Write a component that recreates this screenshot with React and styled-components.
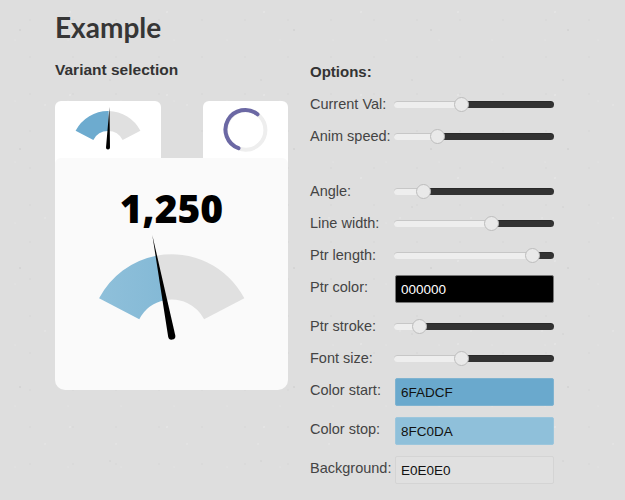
import React from "react";
import styled, { createGlobalStyle } from "styled-components";

const GlobalStyle = createGlobalStyle`
  html, body {
    margin: 0;
    height: 100%;
    overflow: hidden;
    background-color: #dedede;
    background-image:
      radial-gradient(circle at 20px 30px, #d3d3d3 0.6px, transparent 1.4px),
      radial-gradient(circle at 70px 12px, #e4e4e4 0.6px, transparent 1.4px),
      radial-gradient(circle at 110px 80px, #d6d6d6 0.5px, transparent 1.2px),
      radial-gradient(circle at 45px 105px, #e3e3e3 0.6px, transparent 1.3px),
      radial-gradient(circle at 30px 20px, #d9d9d9 0.5px, transparent 1.2px),
      radial-gradient(circle at 15px 40px, #e2e2e2 0.5px, transparent 1.2px);
    background-size: 137px 119px, 97px 83px, 151px 127px, 71px 113px, 43px 37px, 53px 61px;
    font-family: "Liberation Sans", Arial, sans-serif;
  }
`;

const Page = styled.div`
  display: flex;
  width: 625px;
  height: 500px;
  box-sizing: border-box;
  padding-left: 55px;
`;

const LeftColumn = styled.div`
  width: 233px;
  margin-right: 22px;
`;

const Title = styled.h1`
  margin: 0;
  padding-top: 8px;
  height: 52px;
  font-family: Lato, sans-serif;
  font-size: 28px;
  font-weight: 700;
  line-height: 38px;
  color: #363636;
`;

const Heading = styled.div`
  font-size: 15.5px;
  font-weight: 700;
  line-height: 20px;
  color: #333;
`;

const Tabs = styled.div`
  display: flex;
  justify-content: space-between;
  margin-top: 21px;
`;

const Tab = styled.div`
  width: ${(p) => p.$width}px;
  height: 63px;
  background: #fff;
  border-radius: 6px 6px 0 0;
`;

const Card = styled.div`
  position: relative;
  display: flex;
  flex-direction: column;
  align-items: center;
  height: 232px;
  margin-top: -6px;
  background: #fafafa;
  border-radius: 6px 6px 10px 10px;
`;

const Value = styled.div`
  margin-top: 25px;
  height: 40px;
  font-family: "Open Sans", sans-serif;
  font-size: 39px;
  font-weight: 800;
  line-height: 50px;
  color: #000;
`;

const Options = styled.div`
  width: 245px;
`;

const OptionsHeading = styled(Heading)`
  margin-top: 61px;
  height: 27px;
  font-size: 15px;
  line-height: 21px;
`;

const Row = styled.div`
  display: flex;
  align-items: center;
  height: 32px;
  margin-bottom: ${(p) => p.$gap || 0}px;
`;

const InputRow = styled.div`
  display: flex;
  align-items: center;
  height: 28px;
  margin-top: 4px;
  margin-bottom: ${(p) => p.$gap}px;
`;

const Label = styled.label`
  width: 84px;
  flex: none;
  font-size: 14.5px;
  line-height: 18px;
  color: #444;
  white-space: nowrap;
  padding-bottom: ${(p) => (p.$raised ? 4 : 0)}px;
`;

const Range = styled.input`
  -webkit-appearance: none;
  appearance: none;
  display: block;
  width: 160px;
  height: 16px;
  margin: 0;
  background: transparent;

  &::-webkit-slider-runnable-track {
    height: 7px;
    border-radius: 4px;
    background: linear-gradient(
      to right,
      #eeeeee ${(p) => p.$knob}px,
      #323232 ${(p) => p.$knob}px
    );
    box-shadow: inset 0 1px 0 rgba(0, 0, 0, 0.16);
  }

  &::-webkit-slider-thumb {
    -webkit-appearance: none;
    width: 15px;
    height: 15px;
    margin-top: -4px;
    border-radius: 50%;
    box-sizing: border-box;
    background: #e9e9e9;
    border: 1px solid #bdbdbd;
  }
`;

const ColorField = styled.input`
  width: 159px;
  height: 28px;
  box-sizing: border-box;
  margin: 0 0 0 1px;
  padding: 0 5px;
  border: 1px solid ${(p) => p.$border};
  border-radius: 2px;
  outline: none;
  background: ${(p) => p.$bg};
  color: ${(p) => p.$fg};
  font-family: "Liberation Sans", Arial, sans-serif;
  font-size: 13.5px;
`;

const TabIcon = styled.svg`
  display: block;
`;

const GaugeSvg = styled.svg`
  display: block;
  margin-top: 6px;
`;

// ring segment, angles in degrees clockwise from straight up
function ringPath(cx, cy, outer, inner, from, to) {
  const pt = (r, a) => {
    const t = (a * Math.PI) / 180;
    return `${(cx + r * Math.sin(t)).toFixed(2)} ${(cy - r * Math.cos(t)).toFixed(2)}`;
  };
  return `M${pt(outer, from)} A${outer} ${outer} 0 0 1 ${pt(outer, to)} L${pt(inner, to)} A${inner} ${inner} 0 0 0 ${pt(inner, from)} Z`;
}

function needlePath(cx, cy, tipX, tipY, half) {
  const dx = tipX - cx;
  const dy = tipY - cy;
  const len = Math.hypot(dx, dy);
  const nx = (-dy / len) * half;
  const ny = (dx / len) * half;
  return `M${tipX} ${tipY} L${cx + nx} ${cy + ny} A${half} ${half} 0 1 1 ${cx - nx} ${cy - ny} Z`;
}

function Gauge({ cx, cy, outer, inner, split, tip, half, fill }) {
  return (
    <>
      <path d={ringPath(cx, cy, outer, inner, split, 62.6)} fill="#e0e0e0" />
      <path d={ringPath(cx, cy, outer, inner, -62.6, split)} fill={fill} />
      <path d={needlePath(cx, cy, tip[0], tip[1], half)} fill="#000" />
    </>
  );
}

const sliders = {
  current: 68,
  speed: 43,
  angle: 30,
  line: 98,
  length: 138,
  stroke: 25,
  font: 68,
};

function Slider({ label, knob, gap }) {
  // knob is the thumb centre, in px from the start of the track
  const value = ((knob - 7.5) / 145) * 100;
  return (
    <Row $gap={gap}>
      <Label>{label}</Label>
      <Range type="range" min="0" max="100" step="0.1" defaultValue={value} $knob={knob} />
    </Row>
  );
}

function ColorRow({ label, value, bg, fg, border, gap }) {
  return (
    <InputRow $gap={gap}>
      <Label $raised>{label}</Label>
      <ColorField readOnly value={value} $bg={bg} $fg={fg} $border={border} />
    </InputRow>
  );
}

export default function App() {
  return (
    <>
      <GlobalStyle />
      <Page>
        <LeftColumn>
          <Title>Example</Title>
          <Heading>Variant selection</Heading>
          <Tabs>
            <Tab $width={106}>
              <TabIcon width="106" height="57" viewBox="0 0 106 57">
                <Gauge cx={53} cy={46.5} outer={36.5} inner={16.5} split={1} tip={[54.5, 6]} half={2} fill="#6dabcf" />
              </TabIcon>
            </Tab>
            <Tab $width={85}>
              <TabIcon width="85" height="57" viewBox="0 0 85 57">
                <circle cx="42.7" cy="29" r="19.7" fill="none" stroke="#eeeeee" strokeWidth="4" />
                <path
                  d="M35.5 47.2 A19.7 19.7 0 1 1 54.5 13.3"
                  fill="none"
                  stroke="#6b68a4"
                  strokeWidth="4"
                  strokeLinecap="round"
                />
              </TabIcon>
            </Tab>
          </Tabs>
          <Card>
            <Value>1,250</Value>
            <GaugeSvg width="233" height="115" viewBox="0 0 233 115">
              <defs>
                <linearGradient id="arcFill" x1="0" y1="0" x2="1" y2="0">
                  <stop offset="0" stopColor="#8fc0da" />
                  <stop offset="1" stopColor="#84b9d6" />
                </linearGradient>
              </defs>
              <Gauge cx={116.7} cy={107} outer={81.8} inner={36.5} split={-10.9} tip={[97.3, 6]} half={3.6} fill="url(#arcFill)" />
            </GaugeSvg>
          </Card>
        </LeftColumn>
        <Options>
          <OptionsHeading>Options:</OptionsHeading>
          <Slider label="Current Val:" knob={sliders.current} />
          <Slider label="Anim speed:" knob={sliders.speed} gap={23} />
          <Slider label="Angle:" knob={sliders.angle} />
          <Slider label="Line width:" knob={sliders.line} />
          <Slider label="Ptr length:" knob={sliders.length} />
          <ColorRow label="Ptr color:" value="000000" bg="#000" fg="#fff" border="#777" gap={7} />
          <Slider label="Ptr stroke:" knob={sliders.stroke} />
          <Slider label="Font size:" knob={sliders.font} />
          <ColorRow label="Color start:" value="6FADCF" bg="#6aa9cd" fg="#111" border="#7fb3d0" gap={11} />
          <ColorRow label="Color stop:" value="8FC0DA" bg="#8fc0da" fg="#111" border="#9cc6dc" gap={11} />
          <ColorRow label="Background:" value="E0E0E0" bg="#e0e0e0" fg="#111" border="#d4d4d4" gap={0} />
        </Options>
      </Page>
    </>
  );
}
